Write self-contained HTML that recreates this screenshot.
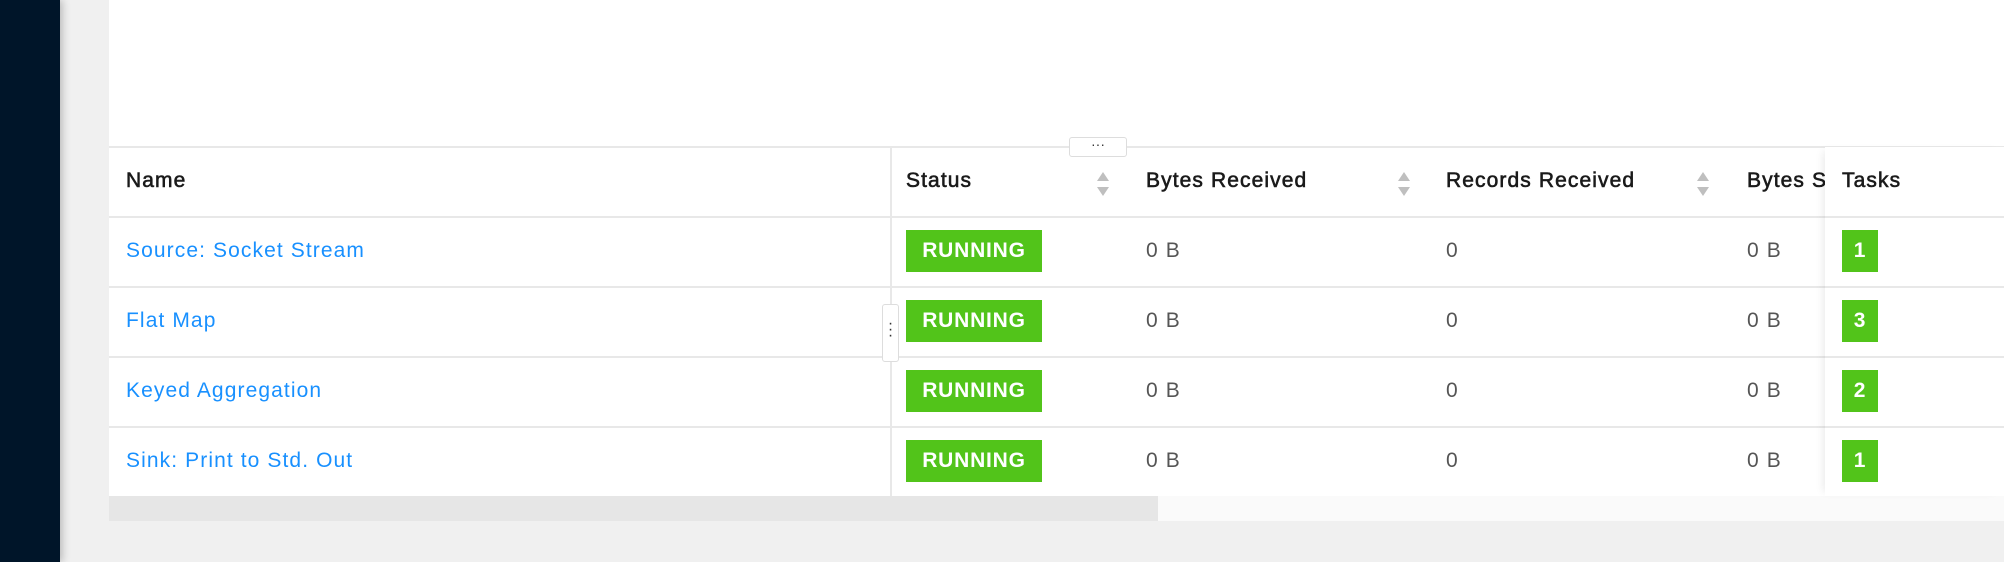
<!DOCTYPE html>
<html><head><style>
body{margin:0;width:2004px;height:562px;background:#f0f0f0;position:relative;overflow:hidden;font-family:"Liberation Sans",sans-serif;}
.sb{position:absolute;left:0;top:0;width:60px;height:562px;background:#001529;box-shadow:2px 0 8px rgba(0,0,0,.25);}
.card{position:absolute;left:109px;top:0;width:1895px;height:521px;background:#fff;}
.hl{position:absolute;left:109px;right:0;height:2px;background:#e8e8e8;}
.t{position:absolute;font-size:21px;letter-spacing:1.1px;white-space:nowrap;}
.h{color:#1a1a1a;font-weight:normal;-webkit-text-stroke:0.6px #1a1a1a;top:169px;}
.a{color:#1890ff;}
.g{color:#555;}
.badge{position:absolute;background:#52c41a;color:#fff;font-weight:bold;font-size:21px;letter-spacing:0.8px;text-align:center;line-height:42px;height:42px;}
.sort{position:absolute;top:170px;width:14px;height:28px;}
</style></head><body>
<div class="sb"></div>
<div class="card"></div>
<div class="hl" style="top:146px"></div>
<div class="hl" style="top:216px"></div>
<div class="hl" style="top:286px"></div>
<div class="hl" style="top:356px"></div>
<div class="hl" style="top:426px"></div>
<div style="position:absolute;left:890px;top:147px;width:2px;height:349px;background:#e8e8e8"></div>
<div style="position:absolute;left:109px;top:496px;width:1895px;height:25px;background:#fafafa"></div>
<div style="position:absolute;left:109px;top:496px;width:1049px;height:25px;background:#e6e6e6"></div>
<div class="t h" style="left:126px">Name</div>
<div class="t h" style="left:906px">Status</div>
<div class="t h" style="left:1146px">Bytes Received</div>
<div class="t h" style="left:1446px">Records Received</div>
<div class="t h" style="left:1747px;width:78px;overflow:hidden">Bytes Sent</div>
<svg class="sort" style="left:1096px" viewBox="0 0 14 28"><path d="M7 2L13 11H1Z M7 26L13 17H1Z" fill="#bfbfbf"/></svg>
<svg class="sort" style="left:1397px" viewBox="0 0 14 28"><path d="M7 2L13 11H1Z M7 26L13 17H1Z" fill="#bfbfbf"/></svg>
<svg class="sort" style="left:1696px" viewBox="0 0 14 28"><path d="M7 2L13 11H1Z M7 26L13 17H1Z" fill="#bfbfbf"/></svg>
<div class="t a" style="left:126px;top:239px">Source: Socket Stream</div>
<div class="t a" style="left:126px;top:309px">Flat Map</div>
<div class="t a" style="left:126px;top:379px">Keyed Aggregation</div>
<div class="t a" style="left:126px;top:449px">Sink: Print to Std. Out</div>
<div class="badge" style="left:906px;top:230px;width:136px">RUNNING</div>
<div class="badge" style="left:906px;top:300px;width:136px">RUNNING</div>
<div class="badge" style="left:906px;top:370px;width:136px">RUNNING</div>
<div class="badge" style="left:906px;top:440px;width:136px">RUNNING</div>
<div class="t g" style="left:1146px;top:239px">0 B</div><div class="t g" style="left:1446px;top:239px">0</div><div class="t g" style="left:1747px;top:239px">0 B</div>
<div class="t g" style="left:1146px;top:309px">0 B</div><div class="t g" style="left:1446px;top:309px">0</div><div class="t g" style="left:1747px;top:309px">0 B</div>
<div class="t g" style="left:1146px;top:379px">0 B</div><div class="t g" style="left:1446px;top:379px">0</div><div class="t g" style="left:1747px;top:379px">0 B</div>
<div class="t g" style="left:1146px;top:449px">0 B</div><div class="t g" style="left:1446px;top:449px">0</div><div class="t g" style="left:1747px;top:449px">0 B</div>
<div style="position:absolute;left:1825px;top:147px;width:179px;height:349px;background:#fff;box-shadow:-6px 0 8px -4px rgba(0,0,0,.08)"></div>
<div class="hl" style="top:216px;left:1825px"></div>
<div class="hl" style="top:286px;left:1825px"></div>
<div class="hl" style="top:356px;left:1825px"></div>
<div class="hl" style="top:426px;left:1825px"></div>
<div class="t h" style="left:1842px">Tasks</div>
<div class="badge" style="left:1842px;top:230px;width:36px">1</div>
<div class="badge" style="left:1842px;top:300px;width:36px">3</div>
<div class="badge" style="left:1842px;top:370px;width:36px">2</div>
<div class="badge" style="left:1842px;top:440px;width:36px">1</div>
<div style="position:absolute;left:1069px;top:137px;width:56px;height:18px;border:1px solid #ddd;border-radius:3px;background:#fff;font-size:14px;line-height:12px;text-align:center;color:#333">···</div>
<div style="position:absolute;left:882px;top:304px;width:17px;height:58px;border:1px solid #ddd;border-radius:3px;background:#fff;text-align:center;font-size:16px;line-height:6px;padding-top:16px;box-sizing:border-box;color:#333">·<br>·<br>·</div>
</body></html>
